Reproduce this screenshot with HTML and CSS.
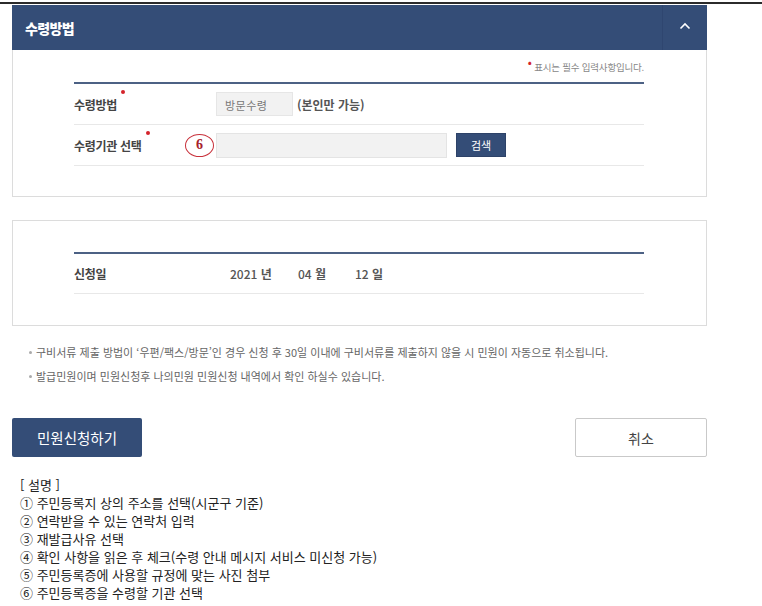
FILE: index.html
```html
<!DOCTYPE html>
<html lang="ko">
<head>
<meta charset="utf-8">
<link rel="stylesheet" href="styles.css">
</head>
<body>
<div class="topline"></div>
<div class="wrap">
  <section class="panel">
    <div class="panel-head">
      <h2 class="panel-title">수령방법</h2>
      <button class="toggle" aria-label="접기">
        <svg width="12" height="8" viewBox="0 0 12 8"><path d="M1.5 6.5 L6 2 L10.5 6.5" fill="none" stroke="#fff" stroke-width="1.6"/></svg>
      </button>
    </div>
    <div class="panel-body">
      <p class="req-note"><span class="dot">•</span> 표시는 필수 입력사항입니다.</p>
      <div class="form-table">
        <div class="row">
          <div class="label">수령방법<span class="req"></span></div>
          <div class="field">
            <span class="readonly">방문수령</span>
            <span class="hint">(본인만 가능)</span>
          </div>
        </div>
        <div class="row">
          <div class="label">수령기관 선택<span class="req"></span></div>
          <div class="field">
            <span class="step">6</span>
            <input class="text-input" type="text" readonly>
            <button class="btn-search">검색</button>
          </div>
        </div>
      </div>
    </div>
  </section>

  <section class="panel panel-plain">
    <div class="form-table">
      <div class="row row-date">
        <div class="label label-date">신청일</div>
        <div class="field date">
          <span class="d-year">2021 <b>년</b></span>
          <span class="d-month">04 <b>월</b></span>
          <span class="d-day">12 <b>일</b></span>
        </div>
      </div>
    </div>
  </section>

  <ul class="notes">
    <li>구비서류 제출 방법이 ‘우편/팩스/방문’인 경우 신청 후 30일 이내에 구비서류를 제출하지 않을 시 민원이 자동으로 취소됩니다.</li>
    <li>발급민원이며 민원신청후 나의민원 민원신청 내역에서 확인 하실수 있습니다.</li>
  </ul>

  <div class="actions">
    <button class="btn-primary">민원신청하기</button>
    <button class="btn-cancel">취소</button>
  </div>
</div>

<div class="desc">
  <p>[ 설명 ]</p>
  <p>① 주민등록지 상의 주소를 선택(시군구 기준)</p>
  <p>② 연락받을 수 있는 연락처 입력</p>
  <p>③ 재발급사유 선택</p>
  <p>④ 확인 사항을 읽은 후 체크(수령 안내 메시지 서비스 미신청 가능)</p>
  <p>⑤ 주민등록증에 사용할 규정에 맞는 사진 첨부</p>
  <p>⑥ 주민등록증을 수령할 기관 선택</p>
</div>
</body>
</html>
```

FILE: styles.css
```css
* { box-sizing: border-box; }
html, body { margin: 0; padding: 0; background: #fff; }
body {
  font-family: "Noto Sans CJK KR", "Noto Sans", sans-serif;
  color: #333;
  width: 762px;
  height: 606px;
  overflow: hidden;
}
.topline {
  height: 5px;
  background: linear-gradient(#fff 0, #fff 2px, #2b2b2b 2px, #2b2b2b 4px, #fff 4px);
}
.wrap {
  width: 695px;
  margin-left: 12px;
}
.panel {
  border: 1px solid #dcdcdc;
  background: #fff;
}
.panel-head {
  height: 45px;
  margin: -1px -1px 0;
  background: #344d77;
  display: flex;
  align-items: center;
  justify-content: space-between;
}
.panel-title {
  margin: 0 0 0 13px;
  font-size: 14px;
  font-weight: 900;
  color: #fff;
  letter-spacing: -0.6px;
}
.toggle {
  width: 45px;
  height: 45px;
  border: 0;
  border-left: 1px solid #2f4670;
  background: transparent;
  display: flex;
  align-items: center;
  justify-content: center;
  padding: 0 0 3px;
}
.panel-body {
  padding: 8px 62px 30px 61px;
}
.req-note {
  margin: 0 0 8px;
  height: 16px;
  line-height: 16px;
  text-align: right;
  font-size: 9.5px;
  color: #888;
  letter-spacing: -0.2px;
}
.req-note .dot {
  color: #d4232b;
  font-size: 12px;
  position: relative;
  top: -4px;
}
.form-table {
  border-top: 2px solid #4c6184;
}
.row {
  display: flex;
  align-items: center;
  height: 41px;
  border-bottom: 1px solid #e8e8e8;
}
.label {
  width: 142px;
  flex: none;
  font-size: 12px;
  font-weight: 700;
  color: #444;
  letter-spacing: -0.3px;
}
.label .req {
  display: inline-block;
  width: 4px;
  height: 4px;
  border-radius: 50%;
  background: #d4232b;
  vertical-align: top;
  margin-left: 4px;
  position: relative;
  top: -6px;
}
.field {
  display: flex;
  align-items: center;
}
.readonly {
  width: 77px;
  height: 24px;
  line-height: 24px;
  background: #f2f2f2;
  border: 1px solid #e6e6e6;
  font-size: 11px;
  color: #777;
  padding-left: 8px;
  letter-spacing: 0.5px;
}
.hint {
  margin-left: 4px;
  font-size: 12px;
  font-weight: 700;
  color: #555;
}
.step {
  position: absolute;
  margin-left: -31px;
  width: 29px;
  height: 23px;
  border: 1.6px solid #c8303a;
  border-radius: 50%;
  color: #a6222b;
  font-family: "Liberation Serif", serif;
  font-weight: 700;
  font-size: 14px;
  display: flex;
  align-items: center;
  justify-content: center;
}
.text-input {
  width: 231px;
  height: 25px;
  background: #f2f2f2;
  border: 1px solid #e4e4e4;
  margin: 0;
  padding: 0;
}
.btn-search {
  margin-left: 9px;
  width: 50px;
  height: 24px;
  background: #344d77;
  border: 1px solid #2d4268;
  color: #fff;
  font-family: inherit;
  font-size: 11px;
  padding: 0;
}
.panel-plain {
  margin-top: 23px;
  padding: 31px 62px 31px 61px;
}
.row-date { height: 40px; }
.label-date { width: 156px; }
.date {
  font-size: 12px;
  font-weight: 500;
  color: #555;
}
.date b { font-weight: 700; }
.date span { display: inline-block; }
.d-year { width: 68px; }
.d-month { width: 57px; }
.notes {
  list-style: none;
  margin: 18px 0 0;
  padding: 0 0 0 17px;
  font-size: 11px;
  color: #666;
  letter-spacing: 0;
}
.notes li {
  height: 24px;
  line-height: 16px;
  position: relative;
  padding-left: 7px;
}
.notes li::before {
  content: "";
  position: absolute;
  left: 0;
  top: 7px;
  width: 3px;
  height: 3px;
  border-radius: 50%;
  background: #aaa;
}
.actions {
  margin-top: 26px;
  display: flex;
  justify-content: space-between;
}
.btn-primary {
  width: 130px;
  height: 39px;
  background: #344d77;
  border: 0;
  border-radius: 2px;
  color: #fff;
  font-family: inherit;
  font-size: 14.5px;
  padding: 0;
}
.btn-cancel {
  width: 132px;
  height: 39px;
  background: #fff;
  border: 1px solid #c9c9c9;
  border-radius: 2px;
  color: #444;
  font-family: inherit;
  font-size: 14px;
  padding: 0;
}
.desc {
  margin: 19px 0 0 20px;
  font-size: 13px;
  color: #222;
}
.desc p {
  margin: 0;
  height: 18px;
  line-height: 18px;
}
```
